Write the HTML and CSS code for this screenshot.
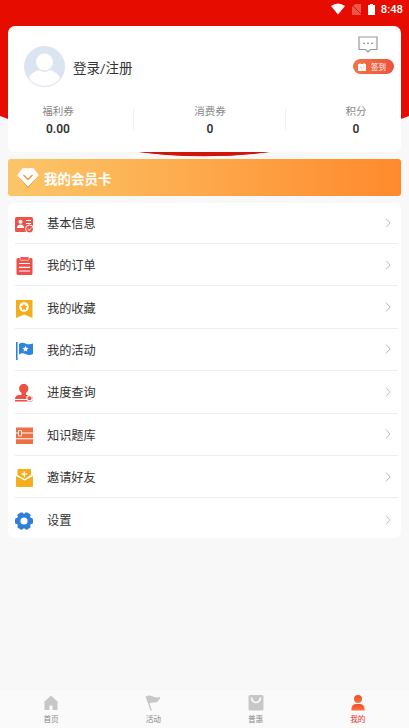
FILE: index.html
```html
<!DOCTYPE html>
<html lang="zh-CN">
<head>
<meta charset="utf-8">
<title>我的</title>
<link rel="stylesheet" href="styles.css">
</head>
<body>
<div class="screen">
  <svg class="backdrop" viewBox="0 0 409 160"><path fill="#e60c00" d="M0 0H409V116Q204.500 196 0 116Z"/><path fill="#cf150c" d="M130 151H278Q204 161.500 130 151Z"/></svg>
  <header class="status">
    <svg width="14" height="12" viewBox="0 0 14 12"><path fill="#fff" d="M0 3Q7-2 14 3L7 11.500Z"/></svg>
    <svg class="sim" width="9" height="11" viewBox="0 0 9 11"><path fill="#f0554c" d="M3 0H9V11H0V3Z"/><path stroke="#d51b12" d="M0 1L9 10"/></svg>
    <svg class="battery" width="7" height="11" viewBox="0 0 7 11"><path fill="#fff" d="M2 0H5V1H7V11H0V1H2Z"/></svg>
    <span>8:48</span>
  </header>

  <section class="profile">
    <div class="user">
      <svg class="avatar" viewBox="0 0 41 41"><defs><clipPath id="face"><circle cx="20.500" cy="20.500" r="19.500"/></clipPath></defs><circle cx="20.500" cy="20.500" r="20.500" fill="#dbe5f1"/><g fill="#fff" clip-path="url(#face)"><circle cx="20.500" cy="16" r="8.500"/><path d="M4 40V34Q7 26 15 24Q20.500 28 26 24Q34 26 37 34V40Z"/></g></svg>
      <span class="login">登录/注册</span>
      <div class="actions">
        <svg width="20" height="18" viewBox="0 0 20 18"><path fill="none" stroke="#999" stroke-width="1.200" d="M1 1H19V13.500H12.500L10 16L7.500 13.500H1Z"/><g fill="#888"><circle cx="6" cy="7.300" r=".9"/><circle cx="10" cy="7.300" r=".9"/><circle cx="14" cy="7.300" r=".9"/></g></svg>
        <div class="sign"><svg width="8" height="8" viewBox="0 0 8 8"><path fill="#fff" d="M0 1H1.500V0H2.500V1H5.500V0H6.500V1H8V8H0Z"/><path fill="none" stroke="#f47850" stroke-width=".6" d="M2.200 3.800L4 5.500L6 3.500"/></svg><span>签到</span></div>
      </div>
    </div>
    <div class="stats">
      <div class="stat left"><span>福利券</span><b>0.00</b></div>
      <div class="stat"><span>消费券</span><b>0</b></div>
      <div class="stat right"><span>积分</span><b>0</b></div>
    </div>
  </section>

  <section class="member">
    <svg width="22" height="20" viewBox="0 0 22 20"><path fill="#c9883c" opacity=".45" d="M5 1H17L21.500 8L11 20L.5 8Z"/><path fill="#fff" stroke="#fff" stroke-linejoin="round" d="M5.500 .7H16.500L21.300 7.300L11 18L.7 7.300Z"/><path fill="none" stroke="#e39b48" stroke-width="1.500" d="M6.500 7L11 11.500L15.500 7"/></svg>
    <span>我的会员卡</span>
  </section>

  <nav class="list">
    <a class="row"><svg class="icon" viewBox="0 0 18 18"><rect y="1" width="18" height="15" rx="1.500" fill="#ed5348"/><circle cx="5.500" cy="5.700" r="2" fill="#fff"/><path fill="#fff" d="M2 12Q2 8.500 5.500 8.500T9 12Z"/><path stroke="#fff" stroke-width="1.200" d="M11 4.500H16M11 7.500H16"/><circle cx="14.500" cy="13" r="4" fill="#ed5348" stroke="#fff"/><path fill="none" stroke="#fff" d="M12.700 13L14.100 14.400L16.500 12"/></svg><span>基本信息</span><svg class="arrow" viewBox="0 0 6 10"><path d="M1 .5L5 5L1 9.500"/></svg></a>
    <a class="row"><svg class="icon" viewBox="0 0 18 18"><rect x="1.500" y="1" width="16" height="17" rx="1.500" fill="#ed5048"/><rect x="5" y="-.3" width="9" height="3.500" rx="1" fill="#ed5048" stroke="#fff" stroke-width=".6"/><path stroke="#fff" stroke-width="1.200" d="M4 6.500H15M4 10.300H15M4 14H15"/></svg><span>我的订单</span><svg class="arrow" viewBox="0 0 6 10"><path d="M1 .5L5 5L1 9.500"/></svg></a>
    <a class="row"><svg class="icon" viewBox="0 0 18 18"><path fill="#f3ae1d" d="M1 0H17.500V18L9.200 14.500L1 18Z"/><circle cx="9" cy="7" r="4.800" fill="#fff"/><path fill="#f3ae1d" d="M9 3.500L10.200 5.700L12.600 6.100L10.900 8L11.200 10.300L9 9.300L6.800 10.300L7.100 8L5.400 6.100L7.800 5.700Z"/></svg><span>我的收藏</span><svg class="arrow" viewBox="0 0 6 10"><path d="M1 .5L5 5L1 9.500"/></svg></a>
    <a class="row"><svg class="icon" viewBox="0 0 18 18"><path fill="#2f83df" d="M1 0H2.600V18H1ZM4 2Q7-.5 11 1.700Q14 3 18 1.500V12Q14 14 10.500 12Q7 10.500 4 12.500Z"/><path fill="#fff" d="M10.500 3.800L11.400 5.700L13.500 6L12 7.500L12.300 9.600L10.500 8.600L8.700 9.600L9 7.500L7.500 6L9.600 5.700Z"/></svg><span>我的活动</span><svg class="arrow" viewBox="0 0 6 10"><path d="M1 .5L5 5L1 9.500"/></svg></a>
    <a class="row"><svg class="icon" viewBox="0 0 18 18"><path fill="#ed5144" d="M4 4.500A4.700 4.700 0 0 1 13.400 4.500Q13.400 7 11 9V11H14Q18 11.500 18 15H0Q0 11.500 3.500 11H6.500V9Q4 7 4 4.500ZM0 16H18V17.500H0Z"/><circle cx="14.500" cy="14.200" r="2.600" fill="#ed5144" stroke="#fff" stroke-width="1.100"/><path stroke="#fff" stroke-width="1.200" d="M16.300 16L18 18"/></svg><span>进度查询</span><svg class="arrow" viewBox="0 0 6 10"><path d="M1 .5L5 5L1 9.500"/></svg></a>
    <a class="row"><svg class="icon" viewBox="0 0 18 18"><path fill="#ed7045" d="M1 .5H18V5.500H1ZM1 6.500H18V11.300H1ZM1 12.300H18V17H1Z"/><path fill="#ed7045" stroke="#fff" stroke-width=".9" d="M3.500 3.500H6.500V9H3.500Z"/></svg><span>知识题库</span><svg class="arrow" viewBox="0 0 6 10"><path d="M1 .5L5 5L1 9.500"/></svg></a>
    <a class="row"><svg class="icon" viewBox="0 0 18 18"><path fill="#f3ae1d" d="M3.500 0H15Q16 0 16 1V6L9.500 10L2.500 6V1Q2.500 0 3.500 0ZM1 7L9.500 11.500L18 7V17Q18 18 17 18H2Q1 18 1 17Z"/><path stroke="#fff" stroke-width="1.300" d="M9.300 2.500V8M6.500 5.200H12"/></svg><span>邀请好友</span><svg class="arrow" viewBox="0 0 6 10"><path d="M1 .5L5 5L1 9.500"/></svg></a>
    <a class="row"><svg class="icon" viewBox="0 0 18 18"><g fill="#2f7fd8"><circle cx="9" cy="9" r="7.600"/><rect x="6" width="6" height="18" rx="1.500" transform="rotate(30 9 9)"/><rect x="6" width="6" height="18" rx="1.500" transform="rotate(90 9 9)"/><rect x="6" width="6" height="18" rx="1.500" transform="rotate(150 9 9)"/></g><circle cx="9" cy="9" r="3.600" fill="#fff"/></svg><span>设置</span><svg class="arrow" viewBox="0 0 6 10"><path d="M1 .5L5 5L1 9.500"/></svg></a>
  </nav>

  <footer class="tabs">
    <a><svg viewBox="0 0 16 16"><path fill="#c7c7c7" d="M8 .5L15.500 7.500H14.500V15H9.500V10.500H6.500V15H1.500V7.500H.5Z"/></svg><span>首页</span></a>
    <a><svg viewBox="0 0 16 16"><path fill="#c7c7c7" d="M.5 1.500Q4-.5 8 1.500Q12 3.200 15.500 2Q13.500 7.500 9.500 7.500Q7 7 4.500 8.500L7 15.500H5.500L.5 1.500Z"/></svg><span>活动</span></a>
    <a><svg viewBox="0 0 16 16"><rect x=".5" width="15" height="15.500" rx="1.500" fill="#c7c7c7"/><path fill="none" stroke="#fff" stroke-width="1.600" d="M3.500 2.500Q4 7.500 8 7.500T12.500 2.500"/></svg><span>普惠</span></a>
    <a class="active"><svg viewBox="0 0 16 16"><defs><linearGradient id="me" x2="0" y2="1"><stop stop-color="#f04b2d"/><stop offset="1" stop-color="#ff713f"/></linearGradient></defs><g fill="url(#me)"><circle cx="8" cy="4" r="4"/><path d="M1.500 15.500Q1 9 6 9H10Q15 9 14.500 15.500Z"/></g></svg><span>我的</span></a>
  </footer>
</div>
</body>
</html>
```
FILE: styles.css
```css
* { box-sizing: border-box; }
body {
  margin: 0;
  font-family: Roboto, "Noto Sans CJK SC", sans-serif;
  color: #333;
}
.screen {
  position: relative;
  display: flex;
  flex-direction: column;
  width: 409px;
  height: 728px;
  background: #f8f8f8;
  overflow: hidden;
}
.backdrop {
  position: absolute;
  top: 0;
  left: 0;
  width: 409px;
  height: 160px;
}
.status {
  position: relative;
  display: flex;
  align-items: center;
  justify-content: flex-end;
  height: 26px;
  padding: 0 6px 8px 0;
  color: #fff;
  font-size: 11.300px;
  line-height: 17px;
  font-weight: 500;
}
.status svg:first-child { margin-right: 1px; }
.sim { margin-left: 6px; }
.battery { margin: 0 6px 0 7px; }
.profile {
  position: relative;
  flex: none;
  height: 125.500px;
  margin: 0 8px;
  background: #fff;
  border-radius: 7px;
}
.user {
  display: flex;
  height: 78px;
  padding: 0 7px 0 16px;
}
.avatar {
  width: 41px;
  height: 41px;
  margin-top: 20px;
}
.login {
  margin: 32px 0 0 8px;
  font-size: 13.500px;
  line-height: 20px;
}
.actions {
  display: flex;
  flex-direction: column;
  align-items: flex-end;
  margin-left: auto;
  padding-top: 10px;
}
.actions > svg { margin-right: 16px; }
.sign {
  display: flex;
  align-items: center;
  gap: 5px;
  width: 41px;
  height: 15px;
  margin-top: 5px;
  padding-left: 5px;
  border-radius: 8px;
  background: linear-gradient(90deg, #f47443, #ee513d);
  color: #fff;
  font-size: 7.500px;
  line-height: 15px;
}
.sign span { padding-top: 1px; }
.stats {
  display: flex;
  height: 41px;
}
.stat {
  display: flex;
  flex: 1;
  flex-direction: column;
  align-items: center;
  font-size: 10.500px;
  line-height: 16px;
  color: #888;
}
.stat.left {
  flex: 0 0 126px;
  padding-right: 26px;
}
.stat.right {
  flex: 0 0 115px;
  padding-left: 25px;
}
.stat:not(.right) {
  background: linear-gradient(#f1f1f1, #f1f1f1) right 4px / 1px 22px no-repeat;
}
.stat b {
  margin-top: 1px;
  font-size: 12px;
  line-height: 17px;
  font-weight: 600;
  color: #333;
}
.member {
  position: relative;
  display: flex;
  align-items: center;
  height: 37px;
  flex: none;
  margin: 7.500px 8px 0;
  padding-left: 9px;
  border-radius: 3px;
  background: linear-gradient(90deg, #fbc668, #ff8a2d);
  color: #fff;
  font-size: 13.500px;
  font-weight: 700;
}
.member span { margin-left: 5px; }
.list {
  flex: none;
  height: 335px;
  margin: 7px 8px 0;
  background: #fff;
  border-radius: 6px;
}
.row {
  display: flex;
  align-items: center;
  height: 42.400px;
  margin: 0 3px 0 7px;
  border-bottom: 1px solid #eee;
  font-size: 12.200px;
}
.row:first-child { height: 41px; }
.row:last-child { border-bottom: 0; }
.icon {
  width: 18px;
  height: 18px;
  margin-top: 3px;
}
.row span {
  margin-left: 14px;
  padding-top: 1px;
}
.row:first-child span { padding-top: 0; }
.arrow {
  width: 6px;
  height: 10px;
  margin: 0 7px 0 auto;
  fill: none;
  stroke: #bbb;
  stroke-width: 1;
}
.tabs {
  display: flex;
  height: 39px;
  margin-top: auto;
  background: #fafafa;
  border-top: 1px solid #f5f5f5;
  color: #888;
  font-size: 7.700px;
  line-height: 12px;
}
.tabs a {
  display: flex;
  flex: 1;
  flex-direction: column;
  align-items: center;
  padding-top: 5px;
}
.tabs svg { width: 16px; height: 16px; }
.tabs span { margin-top: 3px; }
.tabs .active { color: #e3302a; }
```
